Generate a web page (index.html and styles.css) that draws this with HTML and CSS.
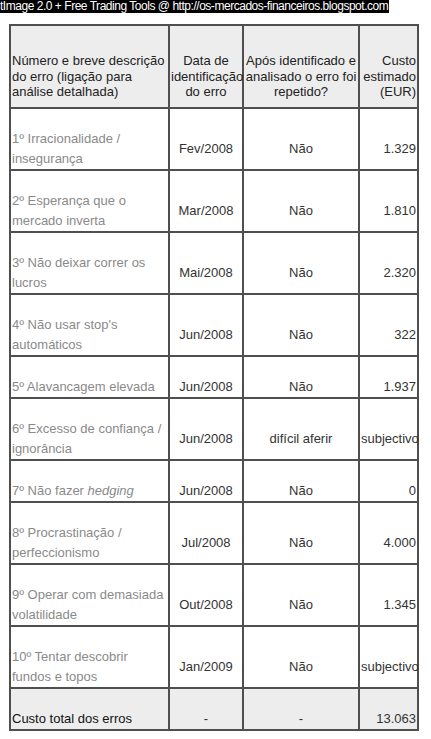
FILE: index.html
```html
<!DOCTYPE html>
<html lang="pt">
<head>
<meta charset="utf-8">
<title>Erros de trading</title>
<link rel="stylesheet" href="styles.css">
</head>
<body>
<div class="banner">tImage 2.0 + Free Trading Tools @ http://os-mercados-financeiros.blogspot.com</div>
<table class="errors">
  <colgroup>
    <col class="c1"><col class="c2"><col class="c3"><col class="c4">
  </colgroup>
  <thead>
    <tr class="head">
      <th class="left">Número e breve descrição do erro (ligação para análise detalhada)</th>
      <th class="center">Data de identificação do erro</th>
      <th class="center">Após identificado e analisado o erro foi repetido?</th>
      <th class="right">Custo estimado (EUR)</th>
    </tr>
  </thead>
  <tbody>
    <tr><td class="name">1º Irracionalidade / insegurança</td><td class="center">Fev/2008</td><td class="center">Não</td><td class="right">1.329</td></tr>
    <tr><td class="name">2º Esperança que o mercado inverta</td><td class="center">Mar/2008</td><td class="center">Não</td><td class="right">1.810</td></tr>
    <tr><td class="name">3º Não deixar correr os lucros</td><td class="center">Mai/2008</td><td class="center">Não</td><td class="right">2.320</td></tr>
    <tr><td class="name">4º Não usar stop's automáticos</td><td class="center">Jun/2008</td><td class="center">Não</td><td class="right">322</td></tr>
    <tr><td class="name">5º Alavancagem elevada</td><td class="center">Jun/2008</td><td class="center">Não</td><td class="right">1.937</td></tr>
    <tr><td class="name">6º Excesso de confiança / ignorância</td><td class="center">Jun/2008</td><td class="center">difícil aferir</td><td class="right">subjectivo</td></tr>
    <tr><td class="name">7º Não fazer <i>hedging</i></td><td class="center">Jun/2008</td><td class="center">Não</td><td class="right">0</td></tr>
    <tr><td class="name">8º Procrastinação / perfeccionismo</td><td class="center">Jul/2008</td><td class="center">Não</td><td class="right">4.000</td></tr>
    <tr><td class="name">9º Operar com demasiada volatilidade</td><td class="center">Out/2008</td><td class="center">Não</td><td class="right">1.345</td></tr>
    <tr><td class="name">10º Tentar descobrir fundos e topos</td><td class="center">Jan/2009</td><td class="center">Não</td><td class="right">subjectivo</td></tr>
    <tr class="total"><td class="left">Custo total dos erros</td><td class="center">-</td><td class="center">-</td><td class="right">13.063</td></tr>
  </tbody>
</table>
</body>
</html>
```
FILE: styles.css
```css
html, body {
  margin: 0;
  padding: 0;
  background: #ffffff;
}

body {
  font-family: "Liberation Sans", Arial, sans-serif;
}

.banner {
  display: block;
  width: max-content;
  background: #000000;
  color: #ffffff;
  font-size: 12px;
  line-height: 13px;
  height: 13px;
  padding: 0 1px 0 0;
  letter-spacing: -0.47px;
  white-space: nowrap;
}

.errors {
  margin: 11px 0 0 9px;
  width: 410px;
  table-layout: fixed;
  border-collapse: separate;
  border-spacing: 0;
  border: 1px solid #4f4f4f;
  font-size: 13px;
  color: #333333;
}

.c1 { width: 159px; }
.c2 { width: 74px; }
.c3 { width: 116px; }
.c4 { width: 59px; }

.errors th,
.errors td {
  border: 1px solid #4f4f4f;
  font-weight: normal;
  white-space: normal;
}

.errors th {
  background: #ededed;
  color: #222222;
  line-height: 15.5px;
  padding: 27px 1px 7px 1px;
  vertical-align: top;
}

.errors td {
  line-height: 20px;
  padding: 20px 1px 0 1px;
  vertical-align: middle;
}

.left { text-align: left; }
.center { text-align: center; }
.right { text-align: right; }

.errors td.name {
  color: #8a8a8a;
  text-align: left;
}

.errors tr.total td {
  background: #ededed;
}

.errors tr.total td.left {
  color: #111111;
}
```
